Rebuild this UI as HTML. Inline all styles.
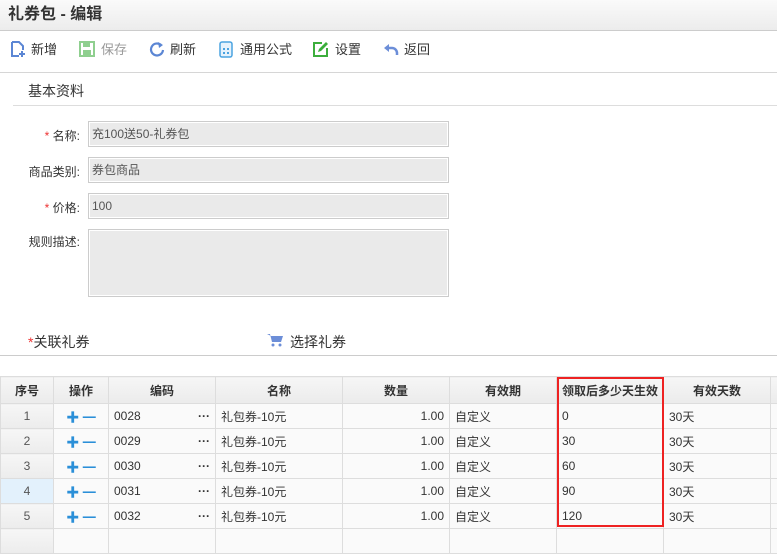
<!DOCTYPE html>
<html><head><meta charset="utf-8"><style>
*{margin:0;padding:0;box-sizing:border-box}
body{width:777px;height:532px;overflow:hidden;background:#fff;font-family:"Liberation Sans","Noto Sans CJK SC",sans-serif;font-size:13px;color:#333;position:relative}
.a{position:absolute}
.title{left:0;top:0;width:777px;height:31px;background:linear-gradient(#fafafa,#ececec);border-bottom:1px solid #ccc;font-weight:bold;font-size:16px;line-height:30px;padding-left:8px;color:#333}
.tb{top:31px;left:0;width:777px;height:42px;border-bottom:1px solid #d6d6d6}
.tbi{position:absolute;top:41px;font-size:13px;line-height:18px}
.lbl{position:absolute;width:80px;text-align:right;font-size:12px}
.inp{position:absolute;left:88px;width:361px;background:#eaeaea;border:1px solid #ccc;box-shadow:inset 0 0 0 1px #fff;font-size:12px;padding-left:3px;color:#555}
.star{color:#e33}
table{position:absolute;left:0;top:376px;border-collapse:collapse;font-size:12px;table-layout:fixed;width:790px}
td,th{border:1px solid #ddd;height:25px;padding:0 5px;white-space:nowrap;overflow:hidden}
th{background:linear-gradient(#f6f6f6,#ebebeb);font-weight:bold;height:27px}
td{background:#fafafa}
td.n{background:linear-gradient(#f6f6f6,#ececec);text-align:center;color:#555}
.pm{color:#2a8fd8;font-weight:bold;text-align:center;font-size:13px}
</style></head><body>
<div class="a title">礼券包 - 编辑</div>
<div class="a tb"></div>
<svg class="a" style="left:10px;top:41px" width="16" height="17"><path d="M2 1h7l4 4v4M2 1v14h7" fill="none" stroke="#5b86d4" stroke-width="2"/><path d="M12 10v6M9 13h6" stroke="#5b86d4" stroke-width="2"/></svg>
<div class="tbi" style="left:31px">新增</div>
<svg class="a" style="left:79px;top:41px" width="16" height="16"><rect x="1" y="1" width="14" height="14" fill="none" stroke="#8fcf8f" stroke-width="2"/><rect x="4" y="2" width="7" height="4" fill="#8fcf8f"/><rect x="4" y="9" width="8" height="5" fill="#8fcf8f"/></svg>
<div class="tbi" style="left:101px;color:#999">保存</div>
<svg class="a" style="left:149px;top:41px" width="16" height="16"><path d="M12 4A6 6 0 1 0 14 9" fill="none" stroke="#5b86d4" stroke-width="2.2"/><path d="M9 1l5 3-4 3z" fill="#5b86d4"/></svg>
<div class="tbi" style="left:170px">刷新</div>
<svg class="a" style="left:219px;top:41px" width="14" height="17"><rect x="1" y="1" width="12" height="15" rx="2" fill="#e6f2fc" stroke="#4aa3e0" stroke-width="1.5"/><g fill="#4aa3e0"><rect x="4" y="7" width="2" height="2"/><rect x="8" y="7" width="2" height="2"/><rect x="4" y="11" width="2" height="2"/><rect x="8" y="11" width="2" height="2"/></g></svg>
<div class="tbi" style="left:240px">通用公式</div>
<svg class="a" style="left:313px;top:41px" width="16" height="16"><path d="M9 2H1v13h13V7" fill="none" stroke="#3cae3c" stroke-width="2"/><path d="M5 11l1-3 7-7 2 2-7 7z" fill="#3cae3c"/></svg>
<div class="tbi" style="left:335px">设置</div>
<svg class="a" style="left:383px;top:42px" width="16" height="14"><path d="M6 2L1 6l5 4" fill="#6c8ed8"/><path d="M4 6h5a5 5 0 0 1 5 5v2" fill="none" stroke="#6c8ed8" stroke-width="2.5"/></svg>
<div class="tbi" style="left:404px">返回</div>
<div class="a" style="left:28px;top:81px;font-size:14px">基本资料</div>
<div class="a" style="left:13px;top:105px;width:764px;border-top:1px solid #ddd"></div>
<div class="lbl" style="top:127px"><span class="star">* </span>名称:</div>
<div class="inp" style="top:121px;height:26px;line-height:24px">充100送50-礼券包</div>
<div class="lbl" style="top:163px">商品类别:</div>
<div class="inp" style="top:157px;height:26px;line-height:24px">券包商品</div>
<div class="lbl" style="top:199px"><span class="star">* </span>价格:</div>
<div class="inp" style="top:193px;height:26px;line-height:24px">100</div>
<div class="lbl" style="top:233px">规则描述:</div>
<div class="inp" style="top:229px;height:68px"></div>
<div class="a" style="left:28px;top:332px;font-size:14px"><span class="star">*</span>关联礼券</div>
<svg class="a" style="left:267px;top:333px" width="17" height="14"><path d="M0 1h3l2 8h9l2-6H4" fill="#6c8ed8"/><circle cx="6" cy="12" r="1.5" fill="#6c8ed8"/><circle cx="13" cy="12" r="1.5" fill="#6c8ed8"/></svg>
<div class="a" style="left:290px;top:332px;font-size:14px">选择礼券</div>
<div class="a" style="left:0;top:355px;width:777px;border-top:1px solid #ccc"></div>
<table>
<colgroup><col style="width:53px"><col style="width:55px"><col style="width:107px"><col style="width:127px"><col style="width:107px"><col style="width:107px"><col style="width:107px"><col style="width:107px"><col style="width:20px"></colgroup>
<tr><th>序号</th><th>操作</th><th>编码</th><th>名称</th><th>数量</th><th>有效期</th><th style="padding:0 2px">领取后多少天生效</th><th>有效天数</th><th></th></tr>
<tr><td class="n">1</td><td class="pm">✚ ━</td><td>0028<span style="float:right;font-weight:bold">···</span></td><td>礼包券-10元</td><td style="text-align:right">1.00</td><td>自定义</td><td>0</td><td>30天</td><td></td></tr>
<tr><td class="n">2</td><td class="pm">✚ ━</td><td>0029<span style="float:right;font-weight:bold">···</span></td><td>礼包券-10元</td><td style="text-align:right">1.00</td><td>自定义</td><td>30</td><td>30天</td><td></td></tr>
<tr><td class="n">3</td><td class="pm">✚ ━</td><td>0030<span style="float:right;font-weight:bold">···</span></td><td>礼包券-10元</td><td style="text-align:right">1.00</td><td>自定义</td><td>60</td><td>30天</td><td></td></tr>
<tr><td class="n" style="background:#e3f1fc">4</td><td class="pm">✚ ━</td><td>0031<span style="float:right;font-weight:bold">···</span></td><td>礼包券-10元</td><td style="text-align:right">1.00</td><td>自定义</td><td>90</td><td>30天</td><td></td></tr>
<tr><td class="n">5</td><td class="pm">✚ ━</td><td>0032<span style="float:right;font-weight:bold">···</span></td><td>礼包券-10元</td><td style="text-align:right">1.00</td><td>自定义</td><td>120</td><td>30天</td><td></td></tr>
<tr><td class="n"></td><td></td><td></td><td></td><td></td><td></td><td></td><td></td><td></td></tr>
</table>
<div class="a" style="left:557px;top:377px;width:107px;height:150px;border:2px solid #e22"></div>
</body></html>
